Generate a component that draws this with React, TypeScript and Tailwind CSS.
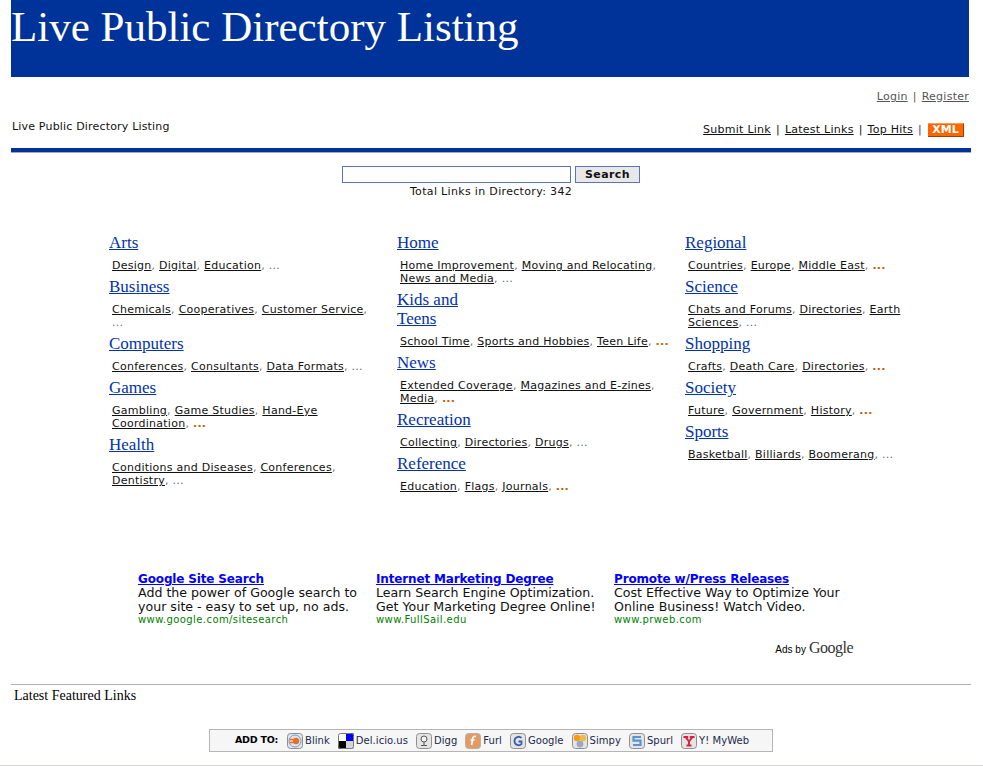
const columns = [
  [
    { title: ['Arts'], links: ['Design', 'Digital', 'Education'], more: 'text-[#7a6a70]' },
    { title: ['Business'], links: ['Chemicals', 'Cooperatives', 'Customer Service'], more: 'text-[#7a6a70]' },
    { title: ['Computers'], links: ['Conferences', 'Consultants', 'Data Formats'], more: 'text-[#5a6a8a]' },
    { title: ['Games'], links: ['Gambling', 'Game Studies', 'Hand-Eye Coordination'], more: 'font-bold text-[#c06000]' },
    { title: ['Health'], links: ['Conditions and Diseases', 'Conferences', 'Dentistry'], more: 'text-[#5a6a8a]' },
  ],
  [
    { title: ['Home'], links: ['Home Improvement', 'Moving and Relocating', 'News and Media'], more: 'text-[#5a6a8a]' },
    { title: ['Kids and', 'Teens'], links: ['School Time', 'Sports and Hobbies', 'Teen Life'], more: 'font-bold text-[#c06000]' },
    { title: ['News'], links: ['Extended Coverage', 'Magazines and E-zines', 'Media'], more: 'font-bold text-[#c06000]' },
    { title: ['Recreation'], links: ['Collecting', 'Directories', 'Drugs'], more: 'text-[#5a6a8a]' },
    { title: ['Reference'], links: ['Education', 'Flags', 'Journals'], more: 'font-bold text-[#c06000]' },
  ],
  [
    { title: ['Regional'], links: ['Countries', 'Europe', 'Middle East'], more: 'font-bold text-[#c06000]' },
    { title: ['Science'], links: ['Chats and Forums', 'Directories', 'Earth Sciences'], more: 'text-[#5a6a8a]' },
    { title: ['Shopping'], links: ['Crafts', 'Death Care', 'Directories'], more: 'font-bold text-[#c06000]' },
    { title: ['Society'], links: ['Future', 'Government', 'History'], more: 'font-bold text-[#c06000]' },
    { title: ['Sports'], links: ['Basketball', 'Billiards', 'Boomerang'], more: 'text-[#5a6a8a]' },
  ],
];

const ads = [
  {
    title: 'Google Site Search',
    lines: ['Add the power of Google search to', 'your site - easy to set up, no ads.'],
    url: 'www.google.com/sitesearch',
  },
  {
    title: 'Internet Marketing Degree',
    lines: ['Learn Search Engine Optimization.', 'Get Your Marketing Degree Online!'],
    url: 'www.FullSail.edu',
  },
  {
    title: 'Promote w/Press Releases',
    lines: ['Cost Effective Way to Optimize Your', 'Online Business! Watch Video.'],
    url: 'www.prweb.com',
  },
];

function BookmarkIcon({ name }: { name: string }) {
  const frame = (
    <rect x="0.5" y="0.5" width="15" height="15" rx="3" fill="#e4e4e4" stroke="#8f8f8f" />
  );
  return (
    <svg viewBox="0 0 16 16" className="h-4 w-4 shrink-0">
      {name === 'Blink' && (
        <>
          {frame}
          <circle cx="8" cy="8" r="6" fill="#d6e6f6" stroke="#6fa3da" />
          <circle cx="9" cy="8" r="3.2" fill="#f26a1b" />
          <path d="M2.5 5.8h3.5v1.4H2.5zM2.5 8.8h3.5v1.4H2.5z" fill="#f26a1b" />
        </>
      )}
      {name === 'Del.icio.us' && (
        <>
          <rect x="0" y="0" width="16" height="16" rx="2" fill="#fff" />
          <path d="M8 0h6a2 2 0 0 1 2 2v6H8z" fill="#0000ee" />
          <path d="M0 8h8v8H2a2 2 0 0 1-2-2z" fill="#000" />
          <rect x="8" y="8" width="8" height="8" fill="#d4d4d4" />
          <rect x="0.5" y="0.5" width="15" height="15" rx="2" fill="none" stroke="#777" />
        </>
      )}
      {name === 'Digg' && (
        <>
          {frame}
          <circle cx="8" cy="6" r="3" fill="#f4f4f4" stroke="#555" />
          <path d="M8 9v3M5 12.5h6" stroke="#555" fill="none" />
        </>
      )}
      {name === 'Furl' && (
        <>
          <rect x="0.5" y="0.5" width="15" height="15" rx="3" fill="#e39a63" stroke="#b9b0a6" />
          <path d="M11 3.5c-2-.6-3 .3-3.3 2L6.6 12M5.5 7h4" stroke="#fff" strokeWidth="1.7" fill="none" />
        </>
      )}
      {name === 'Google' && (
        <>
          {frame}
          <path d="M11.5 5c-2-2.2-7-1.4-7 3s5 5.2 7 3V8.5H8.5" stroke="#3a5fb0" strokeWidth="1.8" fill="none" />
        </>
      )}
      {name === 'Simpy' && (
        <>
          {frame}
          <circle cx="5" cy="5" r="3.2" fill="#f79a10" />
          <circle cx="11" cy="5" r="3.2" fill="#f2b84c" />
          <circle cx="8" cy="11" r="3.4" fill="#9aa9c0" />
        </>
      )}
      {name === 'Spurl' && (
        <>
          {frame}
          <path d="M12 4H4.5v3.7h7v4.3H4" stroke="#5b93cf" strokeWidth="2.2" fill="none" />
        </>
      )}
      {name === 'Y! MyWeb' && (
        <>
          {frame}
          <path d="M2.5 4h4.7M8.8 4h4.7M4.5 4 8 8.5 11.5 4M8 8.5v3.5M5.5 12.5h5" stroke="#d8203c" strokeWidth="1.9" fill="none" />
        </>
      )}
    </svg>
  );
}

export default function App() {
  return (
    <div className="min-h-[766px] bg-white font-['DejaVu_Sans',sans-serif] text-[11px] text-[#111]">
      <div className="ml-[11px] w-[960px]">
        <header className="mr-[2px] h-[77px] bg-[#003399] font-['Liberation_Serif',serif] text-[43px] leading-[54px] text-white">
          Live Public Directory Listing
        </header>

        <div className="flex justify-end pr-[2px] pt-[13px] leading-[14px] tracking-[0.25px] text-[#555]">
          <a className="underline">Login</a>
          <span className="mx-[5px]">|</span>
          <a className="underline">Register</a>
        </div>

        <div className="mt-[9px] flex items-start justify-between pl-[1px] pr-[7px] pt-[7px]">
          <div className="leading-[14px] tracking-[0.18px]">Live Public Directory Listing</div>
          <nav className="mt-[3px] flex items-center leading-[14px] tracking-[0.25px]">
            <a className="underline">Submit Link</a>
            <span className="mx-[5px]">|</span>
            <a className="underline">Latest Links</a>
            <span className="mx-[5px]">|</span>
            <a className="underline">Top Hits</a>
            <span className="mx-[5px] text-[#603060]">|</span>
            <span className="ml-[1px] h-[14px] w-[36px] border-b border-r border-t border-b-[#a04000] border-r-[#a04000] border-t-[#ff9a50] bg-[#ff6600] text-center text-[11px] font-bold leading-[12px] tracking-[0px] text-white">
              XML
            </span>
          </nav>
        </div>

        <div className="mt-[11px] h-[5px] border-b border-[#a8a8b0] bg-[#003399]" />

        <div className="mt-[13px] flex flex-col items-center">
          <form className="flex items-center gap-[4px]">
            <input className="h-[17px] w-[229px] border border-[#5a74b8] bg-white" />
            <button
              type="button"
              className="h-[17px] w-[65px] border border-[#5a74b8] bg-[#e8e8e8] text-[11px] font-bold leading-[14px] tracking-[0.4px]"
            >
              Search
            </button>
          </form>
          <div className="mt-[1px] leading-[15px] tracking-[0.33px]">Total Links in Directory: 342</div>
        </div>

        <main className="ml-[98px] mt-[34px] grid w-[864px] grid-cols-3">
          {columns.map((col, i) => (
            <div key={i} className="pr-[15px]">
              {col.map((cat) => (
                <section key={cat.title[0]}>
                  <h2 className="font-['Liberation_Serif',serif] text-[17px] leading-[20px] text-[#0033aa] underline">
                    {cat.title.map((t, n) => (
                      <div key={t} className={n > 0 ? '-mt-[1px]' : ''}>
                        {t}
                      </div>
                    ))}
                  </h2>
                  <p className="mb-[5px] mt-[6px] pl-[3px] leading-[13px] tracking-[0.26px] text-[#7a6a60]">
                    {cat.links.map((l) => (
                      <span key={l}>
                        <a className="text-[#111] underline">{l}</a>,{' '}
                      </span>
                    ))}
                    <span className={cat.more}>...</span>
                  </p>
                </section>
              ))}
            </div>
          ))}
        </main>

        <div className="ml-[127px] mt-[74px] grid w-[714px] grid-cols-3 text-[12.6px] leading-[14px]">
          {ads.map((ad) => (
            <div key={ad.title} className="whitespace-nowrap">
              <a className="text-[12px] font-bold tracking-[-0.15px] text-[#0000ff] underline">{ad.title}</a>
              {ad.lines.map((l) => (
                <div key={l}>{l}</div>
              ))}
              <div className="text-[10px] leading-[12px] tracking-[0.42px] text-[#008000]">{ad.url}</div>
            </div>
          ))}
        </div>

        <div className="mr-[118px] mt-[13px] flex items-baseline justify-end gap-[3px] leading-[18px] text-black">
          <span className="font-['Liberation_Sans',sans-serif] text-[10px]">Ads by</span>
          <span className="font-['Liberation_Serif',serif] text-[16px] tracking-[-0.5px] text-[#333]">Google</span>
        </div>

        <div className="mt-[25px] border-t border-[#b0b0b0] pl-[3px] pt-[3px] font-['Liberation_Serif',serif] text-[14px] leading-[16px] text-black">
          Latest Featured Links
        </div>

        <div className="ml-[198px] mt-[25px] flex h-[23px] w-[564px] items-center border border-[#b5b5b5] bg-[#f6f6f6] pl-[25px] text-[10px] tracking-[0.05px]">
          <span className="mr-[9px] text-[9.5px] font-bold tracking-[-0.25px] text-black">ADD TO:</span>
          {['Blink', 'Del.icio.us', 'Digg', 'Furl', 'Google', 'Simpy', 'Spurl', 'Y! MyWeb'].map((name) => (
            <span key={name} className="mr-[8px] flex items-center gap-[2px] text-[#1a2a4a]">
              <BookmarkIcon name={name} />
              {name}
            </span>
          ))}
        </div>
      </div>
      <div className="mt-[13px] border-t border-[#d8d8d0]" />
    </div>
  );
}
